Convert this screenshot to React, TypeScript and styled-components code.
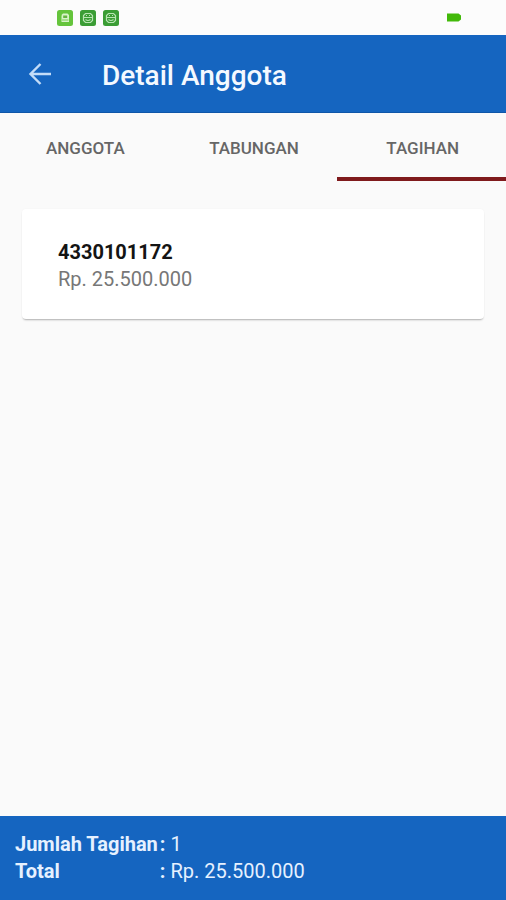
import React, { useState } from "react";
import styled, { createGlobalStyle } from "styled-components";

const GlobalStyle = createGlobalStyle`
  *, *::before, *::after { box-sizing: border-box; }
  body {
    margin: 0;
    background: #fafafa;
    font-family: Roboto, "Liberation Sans", sans-serif;
  }
`;

const Screen = styled.div`
  display: flex;
  flex-direction: column;
  min-height: 100vh;
  background: #fafafa;
`;

const StatusBar = styled.div`
  display: flex;
  align-items: center;
  justify-content: space-between;
  height: 35px;
  padding: 0 44px 0 57px;
  background: #fcfcfc;
`;

const Notifications = styled.div`
  display: flex;
  gap: 7px;
`;

const AppBar = styled.header`
  display: flex;
  align-items: center;
  gap: 48px;
  height: 78px;
  padding: 0 26px;
  background: #1565c0;
  border-bottom: 1px solid #0f56a8;
`;

const BackButton = styled.button`
  display: flex;
  padding: 0;
  border: 0;
  background: none;
  color: #c3dcf8;
  cursor: pointer;
`;

const Title = styled.h1`
  margin: 0;
  padding-top: 4px;
  color: #f4f9ff;
  font-size: 28px;
  font-weight: 500;
  line-height: 36px;
`;

const TabList = styled.div`
  display: grid;
  grid-template-columns: repeat(3, 1fr);
`;

const Tab = styled.button<{ $active: boolean }>`
  height: 68px;
  padding: 6px 0 0 2px;
  border: 0;
  border-bottom: 4px solid ${({ $active }) => ($active ? "#7f1a1c" : "transparent")};
  background: none;
  color: #666;
  font-family: inherit;
  font-size: 17px;
  font-weight: 500;
  cursor: pointer;
`;

const Content = styled.main`
  flex: 1;
  padding: 28px 22px;
`;

const Card = styled.article`
  padding: 30px 36px 26px;
  border-radius: 4px;
  background: #fff;
  box-shadow: 0 2px 2px -1px rgba(0, 0, 0, 0.3), 0 0 2px rgba(0, 0, 0, 0.04);
  font-size: 20px;
  line-height: 27px;
`;

const AccountNumber = styled.h2`
  margin: 0;
  color: #141414;
  font-size: inherit;
  font-weight: 700;
`;

const Amount = styled.p`
  margin: 0;
  color: #777;
`;

const Summary = styled.footer`
  padding: 15px;
  background: #1565c0;
  color: #e6f1ff;
`;

const SummaryList = styled.dl`
  display: grid;
  grid-template-columns: max-content 1fr;
  column-gap: 2px;
  margin: 0;
  font-size: 20px;
  line-height: 27px;
`;

const Label = styled.dt`
  font-weight: 700;
`;

const Value = styled.dd`
  margin: 0;
`;

const BackArrow = () => (
  <svg width="28" height="28" viewBox="0 0 28 28" fill="none" stroke="currentColor" strokeWidth="2.4" aria-hidden="true">
    <path d="M25 14H4.5M14.5 4 4.5 14l10 10" />
  </svg>
);

const ChargeIcon = () => (
  <svg width="16" height="16" viewBox="0 0 16 16" aria-hidden="true">
    <rect width="16" height="16" rx="2.5" fill="#65c43c" />
    <path d="M5 4.5 6 3.5h4.5L12 5v7H4.5V6z" fill="#d8f3c9" />
    <rect x="6.2" y="5.5" width="4" height="2.5" fill="#65b440" />
    <path d="M5 10h6.5" stroke="#7cc957" />
  </svg>
);

const FaceIcon = () => (
  <svg width="16" height="16" viewBox="0 0 16 16" fill="none" stroke="#b8e4b2" strokeWidth="1.2" aria-hidden="true">
    <rect width="16" height="16" rx="2.5" fill="#3b9d35" stroke="none" />
    <path d="M5.5 3.500h5L12.500 5.500v5l-2 2h-5l-2-2v-5zM3.500 7.500h9M5.500 9.500q2.500 2 5 0M6 5.500h1M9 5.500h1" />
  </svg>
);

const BatteryIcon = () => (
  <svg width="16" height="10" viewBox="0 0 16 10" role="img" aria-label="Baterai">
    <path d="M1 .5h11.5l2.500 2v4l-2.500 2H1z" fill="#42b90a" />
  </svg>
);

const tabs = ["ANGGOTA", "TABUNGAN", "TAGIHAN"];

export default function App() {
  const [active, setActive] = useState("TAGIHAN");

  return (
    <>
      <GlobalStyle />
      <Screen>
        <StatusBar>
          <Notifications>
            <ChargeIcon />
            <FaceIcon />
            <FaceIcon />
          </Notifications>
          <BatteryIcon />
        </StatusBar>
        <AppBar>
          <BackButton type="button" aria-label="Kembali">
            <BackArrow />
          </BackButton>
          <Title>Detail Anggota</Title>
        </AppBar>
        <TabList role="tablist">
          {tabs.map((tab) => (
            <Tab
              key={tab}
              type="button"
              role="tab"
              aria-selected={tab === active}
              $active={tab === active}
              onClick={() => setActive(tab)}
            >
              {tab}
            </Tab>
          ))}
        </TabList>
        <Content>
          <Card>
            <AccountNumber>4330101172</AccountNumber>
            <Amount>Rp. 25.500.000</Amount>
          </Card>
        </Content>
        <Summary>
          <SummaryList>
            <Label>Jumlah Tagihan</Label>
            <Value><b>:</b> 1</Value>
            <Label>Total</Label>
            <Value><b>:</b> Rp. 25.500.000</Value>
          </SummaryList>
        </Summary>
      </Screen>
    </>
  );
}
